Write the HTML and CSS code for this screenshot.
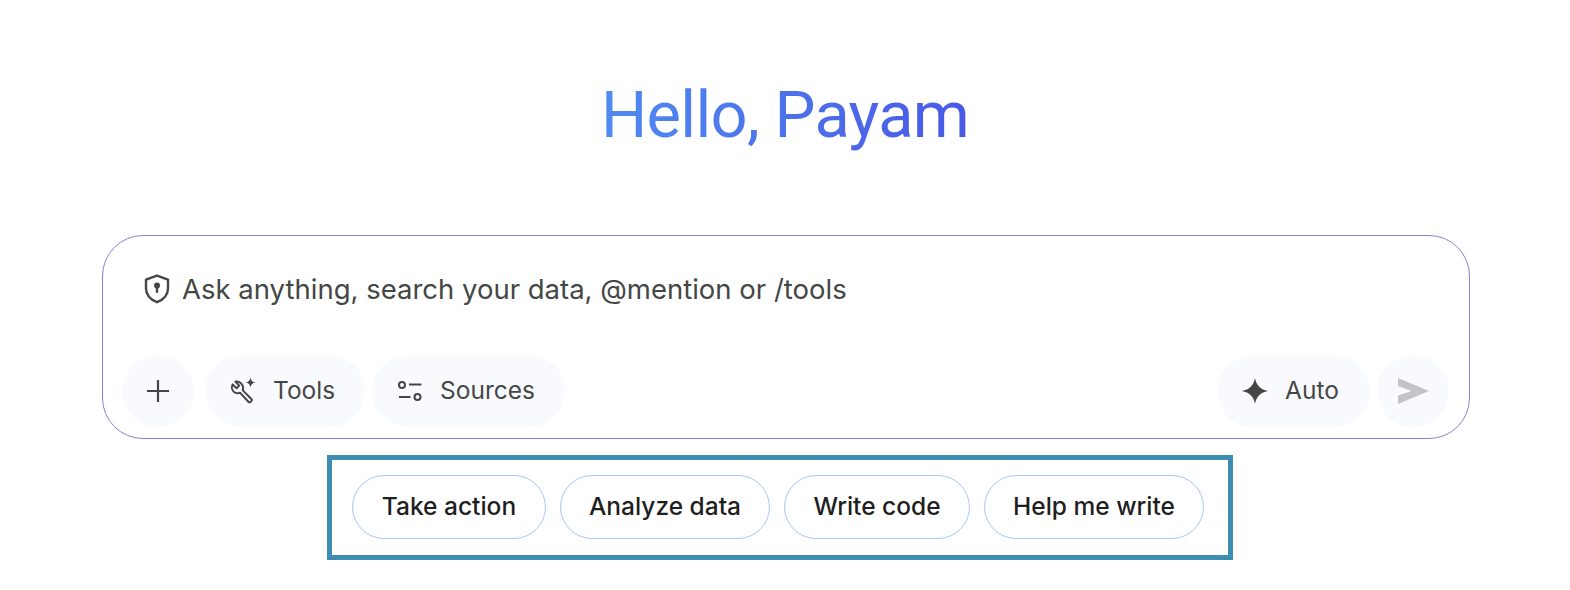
FILE: index.html
```html
<!DOCTYPE html>
<html lang="en">
<head>
    <meta charset="UTF-8">
    <meta name="viewport" content="width=device-width, initial-scale=1.0">
    <title>Hello</title>
    <link rel="stylesheet" href="styles.css">
</head>
<body>
    <div class="page">
        <h1 class="greeting"><span class="greeting-text">Hello, Payam</span></h1>

        <div class="composer">
            <div class="prompt">
                <svg class="shield" width="26" height="30" viewBox="0 0 26 30" fill="none">
                    <path d="M13 1.6 L24 5.6 V14.5 C24 20.5 19.5 25.6 13 28.2 C6.5 25.6 2 20.5 2 14.5 V5.6 Z" stroke="#444746" stroke-width="2.4" stroke-linejoin="round"/>
                    <circle cx="13" cy="11.6" r="3" fill="#444746"/>
                    <rect x="11.8" y="12" width="2.4" height="6.8" fill="#444746"/>
                </svg>
                <span class="prompt-text">Ask anything, search your data, @mention or /tools</span>
            </div>

            <div class="toolbar">
                <div class="toolbar-group">
                    <button class="round-btn plus-btn">
                        <svg width="24" height="24" viewBox="0 0 24 24" fill="none">
                            <path d="M12 1 V23 M1 12 H23" stroke="#444746" stroke-width="2.2"/>
                        </svg>
                    </button>
                    <button class="pill-btn tools-btn">
                        <svg width="28" height="28" viewBox="0 0 28 28" fill="none">
                            <path d="M6.4 4.6 L10.2 8.6 L7.6 11.2 L3.6 7.4 C2.2 10.4 3 14 6 15.6 C8 16.6 10 16.2 11.2 15.8 L19.6 25 C20.8 26.2 23.8 23.4 22.6 22.2 L13.8 13.4 C14.4 11.2 14.2 8.6 12.4 6.6 C10.8 4.6 8.6 4.2 6.4 4.6 Z" stroke="#444746" stroke-width="2" stroke-linejoin="round"/>
                            <path d="M21.5 0.5 C22 3.6 23.4 5 26.5 5.5 C23.4 6 22 7.4 21.5 10.5 C21 7.4 19.6 6 16.5 5.5 C19.6 5 21 3.6 21.5 0.5 Z" fill="#444746"/>
                        </svg>
                        <span class="btn-label">Tools</span>
                    </button>
                    <button class="pill-btn sources-btn">
                        <svg width="24" height="20" viewBox="0 0 24 20" fill="none">
                            <circle cx="4" cy="4" r="3" stroke="#444746" stroke-width="2"/>
                            <path d="M11 3.5 H23.5 M1 16 H12.5" stroke="#444746" stroke-width="2"/>
                            <circle cx="19.5" cy="16" r="3" stroke="#444746" stroke-width="2"/>
                        </svg>
                        <span class="btn-label">Sources</span>
                    </button>
                </div>
                <div class="toolbar-group">
                    <button class="pill-btn auto-btn">
                        <svg width="26" height="26" viewBox="0 0 26 26">
                            <path d="M13 0 C14.4 7.4 18.6 11.6 26 13 C18.6 14.4 14.4 18.6 13 26 C11.6 18.6 7.4 14.4 0 13 C7.4 11.6 11.6 7.4 13 0 Z" fill="#444746"/>
                        </svg>
                        <span class="btn-label">Auto</span>
                    </button>
                    <button class="round-btn">
                        <svg width="31" height="26" viewBox="0 0 31 26">
                            <path d="M0 0 L31 13 L0 26 V17.5 L13.5 13 L0 8 Z" fill="#c2c4c8"/>
                        </svg>
                    </button>
                </div>
            </div>
        </div>

        <div class="chips-box">
            <button class="chip chip-action">Take action</button>
            <button class="chip chip-analyze">Analyze data</button>
            <button class="chip chip-code">Write code</button>
            <button class="chip chip-help">Help me write</button>
        </div>
    </div>
</body>
</html>
```

FILE: styles.css
```css
* {
    box-sizing: border-box;
}

body {
    margin: 0;
    background-color: #fff;
    font-family: Inter, "Liberation Sans", sans-serif;
}

button {
    font-family: inherit;
    cursor: pointer;
}

.page {
    width: 1570px;
    height: 590px;
    overflow: hidden;
    display: flex;
    flex-direction: column;
    padding-top: 71px;
}

.greeting {
    margin: 0;
    height: 164px;
    text-align: center;
    font-family: Roboto, sans-serif;
    font-size: 65px;
    font-weight: 400;
    letter-spacing: -0.7px;
    line-height: 88px;
}

.greeting-text {
    background: linear-gradient(90deg, #4f8bf1, #4a59e6);
    -webkit-background-clip: text;
    background-clip: text;
    color: transparent;
}

.composer {
    width: 1368px;
    height: 204px;
    margin: 0 0 0 102px;
    border: 1px solid #8f7fd4;
    border-radius: 41px;
    padding: 0 20px 11px 19px;
    display: flex;
    flex-direction: column;
    justify-content: space-between;
}

.prompt {
    display: flex;
    align-items: center;
    gap: 12px;
    padding: 38px 0 0 22px;
}

.prompt-text {
    font-size: 27.5px;
    line-height: 30px;
    color: #444746;
}

.toolbar {
    display: flex;
    justify-content: space-between;
}

.toolbar-group {
    display: flex;
    gap: 7px;
}

.round-btn,
.pill-btn {
    height: 72px;
    border: none;
    background-color: #f9fafe;
    display: flex;
    align-items: center;
    color: #444746;
    font-size: 24.5px;
}

.btn-label {
    padding-bottom: 2px;
}

.round-btn {
    width: 72px;
    border-radius: 50%;
    padding: 0;
    justify-content: center;
}

.plus-btn {
    margin-right: 4px;
}

.pill-btn {
    border-radius: 36px;
}

.tools-btn {
    width: 160px;
    padding: 0 0 0 24px;
    gap: 16px;
}

.sources-btn {
    width: 193px;
    padding: 0 0 0 26px;
    gap: 18px;
}

.auto-btn {
    width: 153px;
    padding: 0 0 0 25px;
    gap: 17px;
}

.chips-box {
    width: 906px;
    height: 105px;
    margin: 16px 0 0 327px;
    border: 5px solid #3e8eb3;
    padding: 15px 0 0 20px;
    display: flex;
    gap: 14px;
}

.chip {
    height: 64px;
    border: 1px solid #a8c7fa;
    border-radius: 32px;
    background-color: #fff;
    color: #1f1f1f;
    font-size: 24.5px;
    font-weight: 450;
    padding: 0 0 2px;
}

.chip-action {
    width: 194px;
}

.chip-analyze {
    width: 210px;
}

.chip-code {
    width: 186px;
}

.chip-help {
    width: 220px;
}
```
